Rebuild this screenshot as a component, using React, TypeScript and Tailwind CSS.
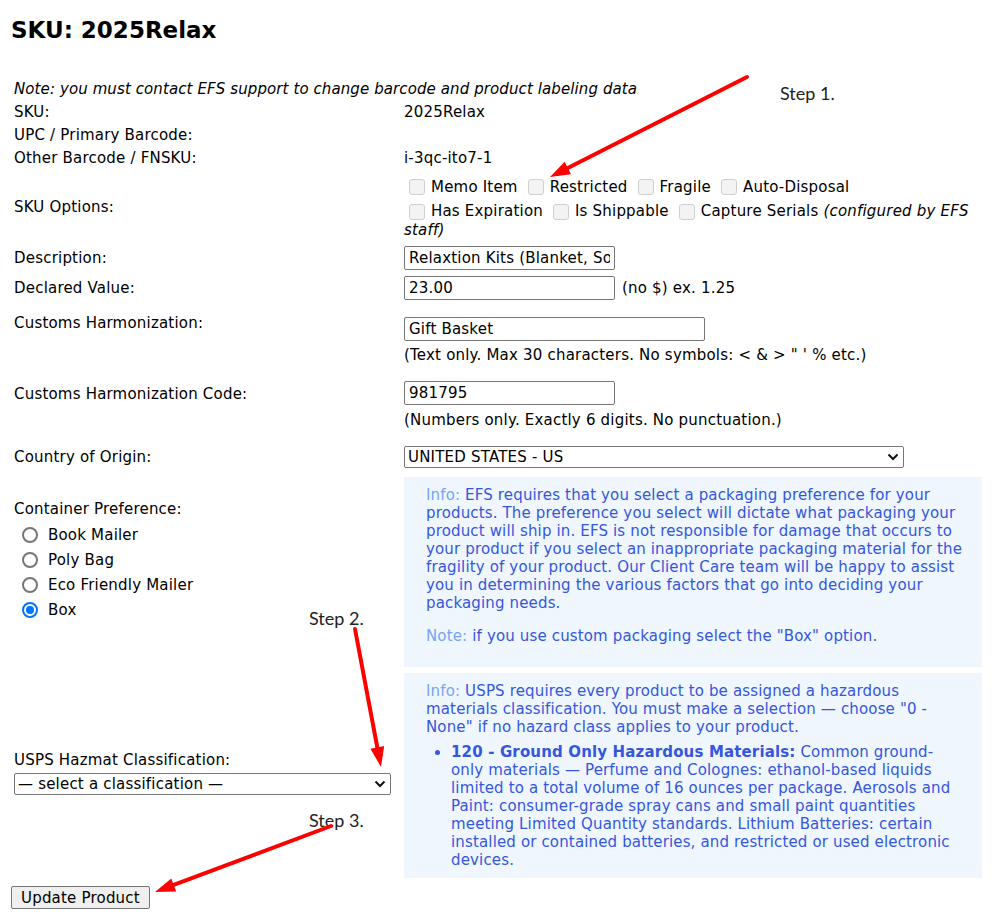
import { ReactNode } from "react";

type CheckItem = { label: ReactNode };

const firstLine: CheckItem[] = [
  { label: "Memo Item" },
  { label: "Restricted" },
  { label: "Fragile" },
  { label: "Auto-Disposal" },
];

const containers = ["Book Mailer", "Poly Bag", "Eco Friendly Mailer", "Box"];

function Check({ label }: CheckItem) {
  return (
    <span className="inline-flex items-center mr-[5px]">
      <input
        type="checkbox"
        disabled
        className="appearance-none ml-[5px] mr-[6px] w-[16px] h-[16px] rounded-[3px] border border-[#cfcfcf] bg-[#f3f3f3]"
      />
      <span>{label}</span>
    </span>
  );
}

function Radio({ label, checked }: { label: string; checked?: boolean }) {
  return (
    <div className="h-[25px] flex items-center">
      <span
        className={
          checked
            ? "ml-[8px] mr-[10px] w-[16px] h-[16px] rounded-full border-2 border-[#0075ff] flex items-center justify-center"
            : "ml-[8px] mr-[10px] w-[16px] h-[16px] rounded-full border-2 border-[#767676]"
        }
      >
        {checked && <span className="w-[8px] h-[8px] rounded-full bg-[#0075ff]" />}
      </span>
      <span>{label}</span>
    </div>
  );
}

function TextBox({ value, width }: { value: string; width: string }) {
  return (
    <input
      readOnly
      value={value}
      className={`${width} h-[24px] px-[4px] border border-[#767676] rounded-[2px] bg-white text-black outline-none`}
    />
  );
}

function Dropdown({ value, width }: { value: string; width: string }) {
  return (
    <div className={`relative ${width} h-[22px]`}>
      <select className="appearance-none w-full h-full pl-[3px] pr-[24px] border border-[#767676] rounded-[2px] bg-white text-black leading-[20px]">
        <option>{value}</option>
      </select>
      <svg
        className="absolute right-[5px] top-[6px] pointer-events-none"
        width="12"
        height="10"
        viewBox="0 0 12 10"
      >
        <path d="M1.5 2.5 L6 7 L10.5 2.5" fill="none" stroke="#111" strokeWidth="2" />
      </svg>
    </div>
  );
}

// red annotation arrow with a filled head at (x2, y2)
function Arrow({ x1, y1, x2, y2 }: { x1: number; y1: number; x2: number; y2: number }) {
  const a = Math.atan2(y2 - y1, x2 - x1);
  const len = 20;
  const half = 7;
  const bx = x2 - len * Math.cos(a);
  const by = y2 - len * Math.sin(a);
  const px = -Math.sin(a) * half;
  const py = Math.cos(a) * half;
  return (
    <g>
      <line x1={x1} y1={y1} x2={bx} y2={by} stroke="#ff0000" strokeWidth="4" strokeLinecap="round" />
      <polygon
        points={`${x2},${y2} ${bx + px},${by + py} ${bx - px},${by - py}`}
        fill="#ff0000"
      />
    </g>
  );
}

export default function App() {
  return (
    <div className="relative w-[999px] min-h-[919px] bg-white text-black font-['DejaVu_Sans',Verdana,sans-serif] text-[15px] leading-[18px] tracking-[0.2px]">
      <h1 className="pl-[11px] pt-[17px] text-[23px] leading-[27px] font-bold tracking-normal">
        SKU: 2025Relax
      </h1>

      <div className="mt-[33px] pl-[14px]">
        <div className="h-[23px] flex items-center italic tracking-[0.1px]">
          Note: you must contact EFS support to change barcode and product labeling data
        </div>

        <div className="grid grid-cols-[390px_1fr]">
          <div className="h-[23px] flex items-center">SKU:</div>
          <div className="h-[23px] flex items-center">2025Relax</div>
          <div className="h-[23px] flex items-center">UPC / Primary Barcode:</div>
          <div className="h-[23px]" />
          <div className="h-[23px] flex items-center">Other Barcode / FNSKU:</div>
          <div className="h-[23px] flex items-center">i-3qc-ito7-1</div>

          {/* SKU option flags */}
          <div className="flex items-center pt-[4px]">SKU Options:</div>
          <div className="pt-[5px]">
            <div className="h-[26px] flex items-center">
              {firstLine.map((c, i) => (
                <Check key={i} label={c.label} />
              ))}
            </div>
            <div className="mt-[2px] leading-[19px]">
              <div className="flex items-center h-[19px]">
                <Check label="Has Expiration" />
                <Check label="Is Shippable" />
                <Check
                  label={
                    <>
                      Capture Serials <i>(configured by EFS</i>
                    </>
                  }
                />
              </div>
              <div className="italic">staff)</div>
            </div>
          </div>

          <div className="h-[30px] mt-[3px] flex items-center">Description:</div>
          <div className="h-[30px] mt-[3px] flex items-center">
            <TextBox value="Relaxtion Kits (Blanket, Socks)" width="w-[211px]" />
          </div>
          <div className="h-[30px] flex items-center">Declared Value:</div>
          <div className="h-[30px] flex items-center gap-[7px]">
            <TextBox value="23.00" width="w-[211px]" />
            <span>(no $) ex. 1.25</span>
          </div>

          <div className="pt-[11px]">Customs Harmonization:</div>
          <div className="pt-[14px]">
            <TextBox value="Gift Basket" width="w-[301px]" />
            <div className="mt-[4px] leading-[20px]">
              (Text only. Max 30 characters. No symbols: &lt; &amp; &gt; " ' % etc.)
            </div>
          </div>

          <div className="pt-[20px]">Customs Harmonization Code:</div>
          <div className="pt-[16px]">
            <TextBox value="981795" width="w-[211px]" />
            <div className="mt-[5px] leading-[20px]">
              (Numbers only. Exactly 6 digits. No punctuation.)
            </div>
          </div>

          <div className="mt-[16px] h-[22px] flex items-center">Country of Origin:</div>
          <div className="mt-[16px]">
            <Dropdown value="UNITED STATES - US" width="w-[500px]" />
          </div>

          {/* container preference + packaging info */}
          <div className="mt-[9px] pt-[22px]">
            <div className="leading-[20px]">Container Preference:</div>
            <div className="mt-[3px]">
              {containers.map((c) => (
                <Radio key={c} label={c} checked={c === "Box"} />
              ))}
            </div>
          </div>
          <div className="mt-[9px] mr-[17px] h-[190px] bg-[#eff6fe] pl-[22px] pr-[16px] pt-[9px] tracking-[0.15px] text-[#3557dc]">
            <p>
              <span className="text-[#77a4f3]">Info:</span> EFS requires that you select a packaging
              preference for your products. The preference you select will dictate what packaging
              your product will ship in. EFS is not responsible for damage that occurs to your
              product if you select an inappropriate packaging material for the fragility of your
              product. Our Client Care team will be happy to assist you in determining the various
              factors that go into deciding your packaging needs.
            </p>
            <p className="mt-[15px]">
              <span className="text-[#77a4f3]">Note:</span> if you use custom packaging select the
              "Box" option.
            </p>
          </div>

          {/* hazmat classification */}
          <div className="mt-[6px] pt-[77px]">
            <div className="leading-[20px]">USPS Hazmat Classification:</div>
            <div className="mt-[3px]">
              <Dropdown value="— select a classification —" width="w-[377px]" />
            </div>
          </div>
          <div className="mt-[6px] mr-[17px] h-[205px] bg-[#eff6fe] pl-[22px] pr-[22px] pt-[9px] tracking-[0.15px] text-[#3557dc]">
            <p>
              <span className="text-[#77a4f3]">Info:</span> USPS requires every product to be
              assigned a hazardous materials classification. You must make a selection — choose "0 -
              None" if no hazard class applies to your product.
            </p>
            <ul className="mt-[7px] list-disc pl-[25px]">
              <li>
                <b>120 - Ground Only Hazardous Materials:</b> Common ground-only materials — Perfume
                and Colognes: ethanol-based liquids limited to a total volume of 16 ounces per
                package. Aerosols and Paint: consumer-grade spray cans and small paint quantities
                meeting Limited Quantity standards. Lithium Batteries: certain installed or
                contained batteries, and restricted or used electronic devices.
              </li>
            </ul>
          </div>
        </div>
      </div>

      <div className="mt-[8px] pl-[11px]">
        <button className="h-[23px] px-[9px] border border-[#767676] rounded-[2px] bg-[#efefef] text-black">
          Update Product
        </button>
      </div>

      {/* step annotations */}
      <span className="absolute left-[780px] top-[82px] font-['Lato',sans-serif] text-[18px] leading-[22px] tracking-normal text-[#222]">
        Step 1.
      </span>
      <span className="absolute left-[309px] top-[607px] font-['Lato',sans-serif] text-[18px] leading-[22px] tracking-normal text-[#222]">
        Step 2.
      </span>
      <span className="absolute left-[309px] top-[809px] font-['Lato',sans-serif] text-[18px] leading-[22px] tracking-normal text-[#222]">
        Step 3.
      </span>
      <svg className="absolute inset-0 pointer-events-none" width="999" height="919">
        <Arrow x1={747} y1={77} x2={550} y2={177} />
        <Arrow x1={355} y1={629} x2={381} y2={767} />
        <Arrow x1={331} y1={826} x2={155} y2={892} />
      </svg>
    </div>
  );
}
